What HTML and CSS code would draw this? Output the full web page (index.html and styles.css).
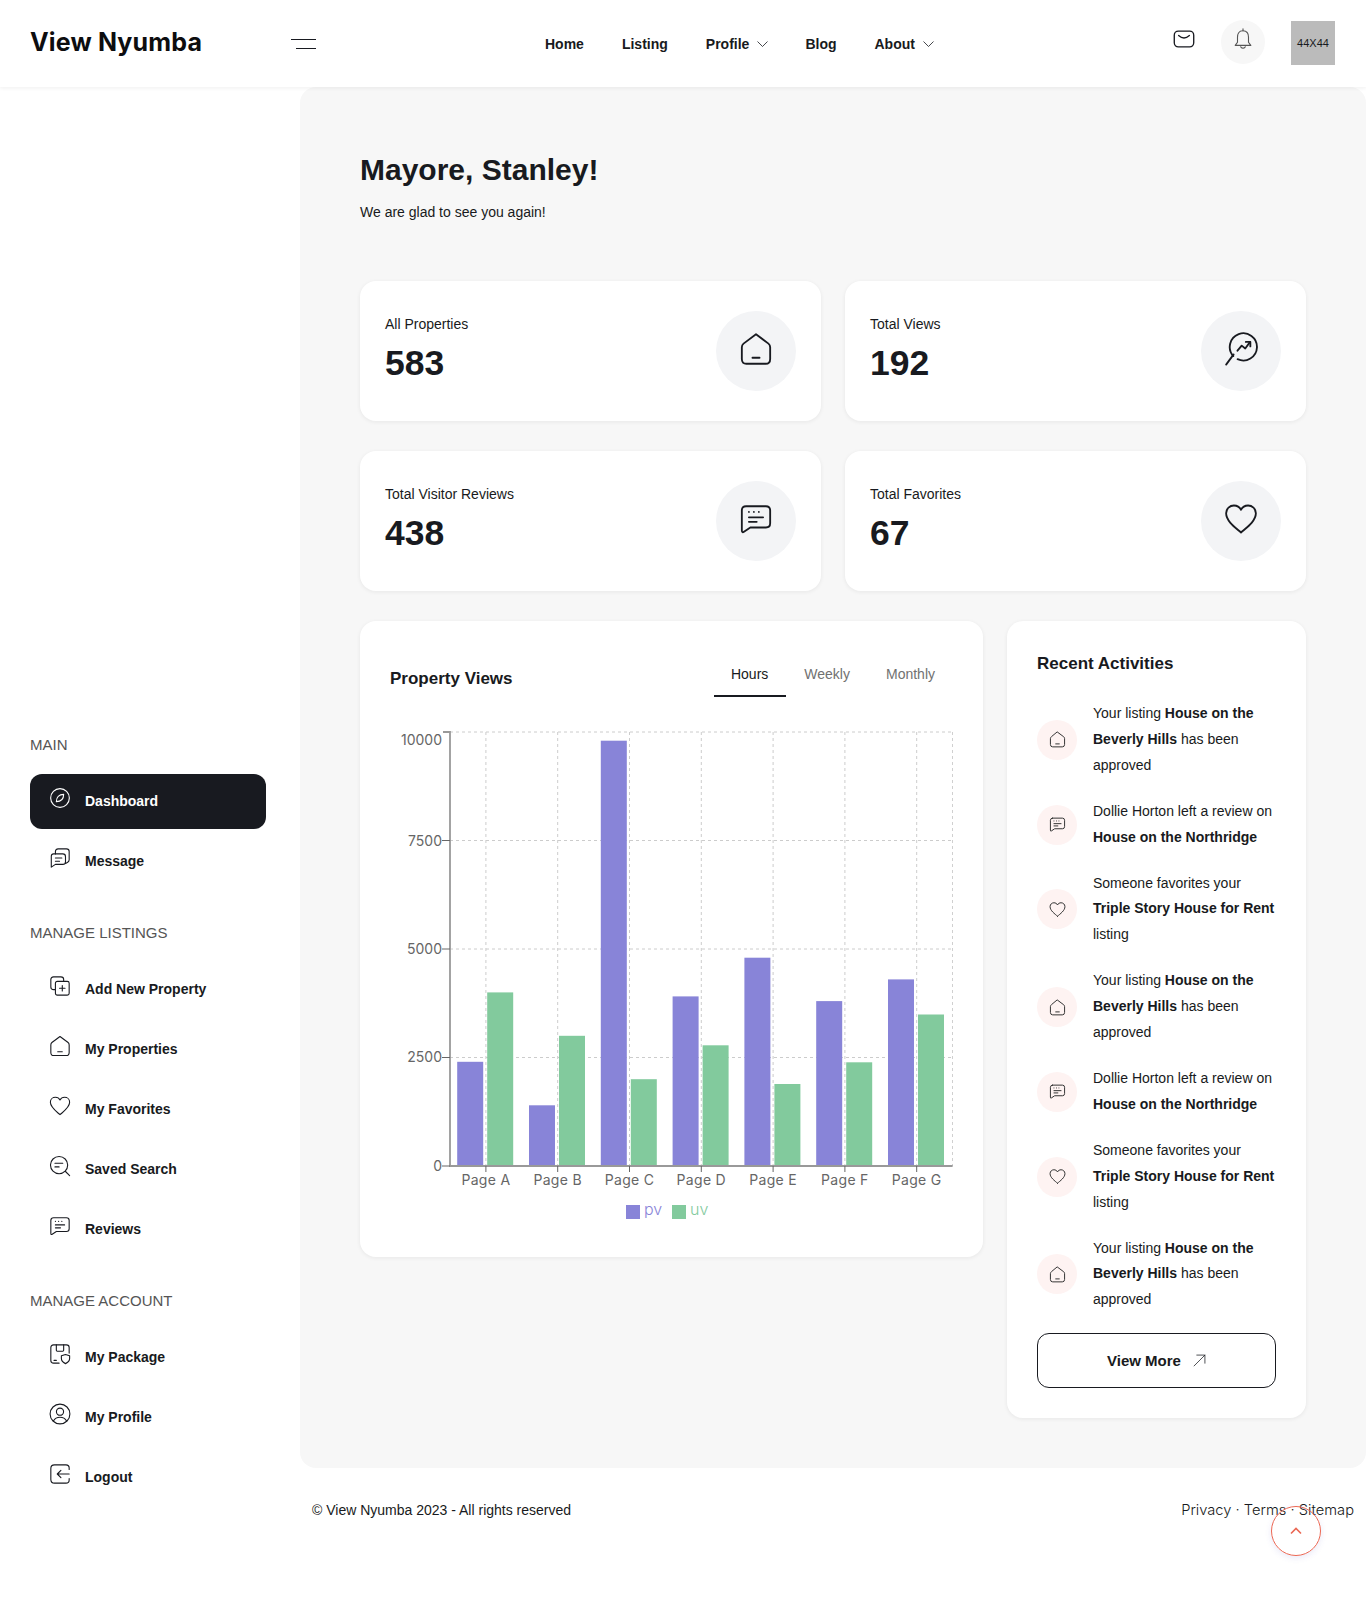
FILE: index.html
```html
<!DOCTYPE html>
<html lang="en">
<head>
    <meta charset="UTF-8">
    <meta name="viewport" content="width=device-width, initial-scale=1.0">
    <title>View Nyumba - Dashboard</title>
    <link rel="stylesheet" href="styles.css">
</head>
<body>

    <!-- icon set -->
    <svg class="sprite" xmlns="http://www.w3.org/2000/svg">
        <symbol id="i-home" viewBox="0 0 24 24"><path d="M12 1.6 L20.8 8.2 Q22 9.2 22 10.8 V19 Q22 22.4 18.8 22.4 H5.2 Q2 22.4 2 19 V10.8 Q2 9.2 3.2 8.2 Z"/><path d="M9.5 18.2 H14.5"/></symbol>
        <symbol id="i-views" viewBox="0 0 24 24"><path d="M6.6 17 A9.6 9.6 0 1 1 9.6 19.2"/><path d="M1.5 23 L6.8 15.8"/><path d="M9.5 13.2 L12.5 9.6 L15 11.6 L18.4 7"/><path d="M15.4 7 H18.6 V10.2"/></symbol>
        <symbol id="i-reviews" viewBox="0 0 24 24"><path d="M5 3 H19 Q22 3 22 6 V15 Q22 18 19 18 H8 L3.5 21 Q2 22 2 20 V6 Q2 3 5 3 Z"/><path d="M7 7h.01 M10.5 7h.01 M14 7h.01"/><path d="M7 10.8 H17 M7 14 H12.5"/></symbol>
        <symbol id="i-heart" viewBox="0 0 24 24"><path d="M12 21.5 C8 18 1.5 13.5 1.5 8 C1.5 4.5 4.2 2.5 7 2.5 C9 2.5 11 3.5 12 5.5 C13 3.5 15 2.5 17 2.5 C19.8 2.5 22.5 4.5 22.5 8 C22.5 13.5 16 18 12 21.5 Z"/></symbol>
        <symbol id="i-compass" viewBox="0 0 24 24"><circle cx="12" cy="12" r="10.2"/><path d="M8 16 C8 11 11 8 16 8 C16 13 13 16 8 16 Z"/></symbol>
        <symbol id="i-message" viewBox="0 0 24 24"><path d="M5 7.5 H15 Q18 7.5 18 10.5 V16 Q18 19 15 19 H7 L2.5 22 V10 Q2.5 7.5 5 7.5 Z"/><path d="M7 7.5 V5 Q7 2 10 2 H19 Q22 2 22 5 V14 Q22 16 20 17 L18 18"/><path d="M7 12 H14 M7 15.5 H11.5"/></symbol>
        <symbol id="i-add" viewBox="0 0 24 24"><path d="M6.5 16 H5 Q2 16 2 13 V5 Q2 2 5 2 H13 Q16 2 16 5 V7"/><rect x="7" y="7" width="15" height="15" rx="2"/><path d="M14.5 11.5 V17.5 M11.5 14.5 H17.5"/></symbol>
        <symbol id="i-search" viewBox="0 0 24 24"><circle cx="11" cy="11" r="9.4"/><path d="M18 18 L22.5 22.5"/><path d="M6.5 9 H15 M6.5 13 H11"/></symbol>
        <symbol id="i-package" viewBox="0 0 24 24"><path d="M11 22 H5 Q2 22 2 19 V5 Q2 2 5 2 H19 Q22 2 22 5 V11"/><path d="M8 2 V8 Q8 9 9 9 H15 Q16 9 16 8 V2"/><path d="M18 12.5 L22.5 14 V17 Q22.5 20.5 18 22.5 Q13.5 20.5 13.5 17 V14 Z"/><path d="M5.5 19 H8"/></symbol>
        <symbol id="i-profile" viewBox="0 0 24 24"><circle cx="12" cy="12" r="10.8"/><circle cx="12" cy="9.5" r="3.9"/><path d="M4.8 19.6 C6.5 16.6 9 15.6 12 15.6 C15 15.6 17.5 16.6 19.2 19.6"/></symbol>
        <symbol id="i-logout" viewBox="0 0 24 24"><path d="M22 7 V5.5 Q22 2 18.5 2 H6 Q2 2 2 6 V18 Q2 22 6 22 H18.5 Q22 22 22 18.5 V17"/><path d="M22 12 H9 M13 8 L9 12 L13 16"/></symbol>
        <symbol id="i-mail" viewBox="0 0 24 20"><rect x="1.2" y="1.2" width="21.6" height="17.6" rx="4.5"/><path d="M6 6.2 Q12 11.5 18 6.2"/></symbol>
        <symbol id="i-bell" viewBox="0 0 24 24"><path d="M12 3 C7 3 6 7 6 10 V15.5 L3.5 19 H20.5 L18 15.5 V10 C18 7 17 3 12 3 Z"/><path d="M12 1 V3 M9.5 20.5 Q12 23.5 14.5 20.5"/></symbol>
        <symbol id="i-arrow" viewBox="0 0 24 24"><path d="M2 22 L22 2 M7 2 H22 V17"/></symbol>
        <symbol id="i-down" viewBox="0 0 12 8"><path d="M1 1.5 L6 6.5 L11 1.5"/></symbol>
    </svg>

    <header class="topbar">
        <a class="logo">View Nyumba</a>
        <div class="burger"><span></span><span></span></div>
        <nav class="topnav">
            <a>Home</a>
            <a>Listing</a>
            <a>Profile <svg class="caret"><use href="#i-down"/></svg></a>
            <a>Blog</a>
            <a>About <svg class="caret"><use href="#i-down"/></svg></a>
        </nav>
        <div class="top-actions">
            <svg class="icon mail-icon"><use href="#i-mail"/></svg>
            <div class="bell"><svg class="icon bell-icon"><use href="#i-bell"/></svg></div>
            <div class="avatar">44X44</div>
        </div>
    </header>

    <div class="wrapper">
        <aside class="sidebar">
            <div class="side-group">
                <p class="side-title">MAIN</p>
                <a class="side-link active"><svg class="icon"><use href="#i-compass"/></svg>Dashboard</a>
                <a class="side-link"><svg class="icon"><use href="#i-message"/></svg>Message</a>
            </div>
            <div class="side-group">
                <p class="side-title">MANAGE LISTINGS</p>
                <a class="side-link"><svg class="icon"><use href="#i-add"/></svg>Add New Property</a>
                <a class="side-link"><svg class="icon"><use href="#i-home"/></svg>My Properties</a>
                <a class="side-link"><svg class="icon"><use href="#i-heart"/></svg>My Favorites</a>
                <a class="side-link"><svg class="icon"><use href="#i-search"/></svg>Saved Search</a>
                <a class="side-link"><svg class="icon"><use href="#i-reviews"/></svg>Reviews</a>
            </div>
            <div class="side-group">
                <p class="side-title">MANAGE ACCOUNT</p>
                <a class="side-link"><svg class="icon"><use href="#i-package"/></svg>My Package</a>
                <a class="side-link"><svg class="icon"><use href="#i-profile"/></svg>My Profile</a>
                <a class="side-link"><svg class="icon"><use href="#i-logout"/></svg>Logout</a>
            </div>
        </aside>

        <div class="content">
            <main class="panel">
                <h1>Mayore, Stanley!</h1>
                <p class="welcome">We are glad to see you again!</p>

                <section class="stats">
                    <div class="stat-card">
                        <div>
                            <div class="stat-label">All Properties</div>
                            <div class="stat-value">583</div>
                        </div>
                        <div class="stat-icon"><svg class="icon"><use href="#i-home"/></svg></div>
                    </div>
                    <div class="stat-card">
                        <div>
                            <div class="stat-label">Total Views</div>
                            <div class="stat-value">192</div>
                        </div>
                        <div class="stat-icon"><svg class="icon"><use href="#i-views"/></svg></div>
                    </div>
                    <div class="stat-card">
                        <div>
                            <div class="stat-label">Total Visitor Reviews</div>
                            <div class="stat-value">438</div>
                        </div>
                        <div class="stat-icon"><svg class="icon"><use href="#i-reviews"/></svg></div>
                    </div>
                    <div class="stat-card">
                        <div>
                            <div class="stat-label">Total Favorites</div>
                            <div class="stat-value">67</div>
                        </div>
                        <div class="stat-icon"><svg class="icon"><use href="#i-heart"/></svg></div>
                    </div>
                </section>

                <section class="lower">
                    <div class="card chart-card">
                        <div class="chart-head">
                            <h4>Property Views</h4>
                            <div class="tabs">
                                <a class="tab active">Hours</a>
                                <a class="tab">Weekly</a>
                                <a class="tab">Monthly</a>
                            </div>
                        </div>
                        <svg class="chart" viewBox="0 0 563 507">
                            <g class="grid">
                                <path d="M60 12 H562.6 M60 120.5 H562.6 M60 229 H562.6 M60 337.5 H562.6"/>
                                <path d="M95.9 12 V446 M167.7 12 V446 M239.5 12 V446 M311.3 12 V446 M383.1 12 V446 M454.9 12 V446 M526.7 12 V446 M562.6 12 V446"/>
                            </g>
                            <g class="bars-pv">
                                <rect x="67.2" y="341.8" width="26" height="104.2"/>
                                <rect x="139" y="385.3" width="26" height="60.7"/>
                                <rect x="210.8" y="20.7" width="26" height="425.3"/>
                                <rect x="282.6" y="276.4" width="26" height="169.6"/>
                                <rect x="354.4" y="237.7" width="26" height="208.3"/>
                                <rect x="426.2" y="281.1" width="26" height="164.9"/>
                                <rect x="498" y="259.4" width="26" height="186.6"/>
                            </g>
                            <g class="bars-uv">
                                <rect x="97.2" y="272.4" width="26" height="173.6"/>
                                <rect x="169" y="315.8" width="26" height="130.2"/>
                                <rect x="240.8" y="359.2" width="26" height="86.8"/>
                                <rect x="312.6" y="325.3" width="26" height="120.7"/>
                                <rect x="384.4" y="364" width="26" height="82"/>
                                <rect x="456.2" y="342.3" width="26" height="103.7"/>
                                <rect x="528" y="294.5" width="26" height="151.5"/>
                            </g>
                            <path class="axis" d="M53 12 H60 V446 H562.6"/>
                            <path class="tick" d="M52 120.5 H60 M52 229 H60 M52 337.5 H60 M52 446 H60 M95.9 446 V452 M167.7 446 V452 M239.5 446 V452 M311.3 446 V452 M383.1 446 V452 M454.9 446 V452 M526.7 446 V452"/>
                            <g class="y-labels">
                                <text x="52" y="25">10000</text>
                                <text x="52" y="126">7500</text>
                                <text x="52" y="234">5000</text>
                                <text x="52" y="342">2500</text>
                                <text x="52" y="451">0</text>
                            </g>
                            <g class="x-labels">
                                <text x="95.9" y="465">Page A</text>
                                <text x="167.7" y="465">Page B</text>
                                <text x="239.5" y="465">Page C</text>
                                <text x="311.3" y="465">Page D</text>
                                <text x="383.1" y="465">Page E</text>
                                <text x="454.9" y="465">Page F</text>
                                <text x="526.7" y="465">Page G</text>
                            </g>
                            <rect class="key-pv" x="236" y="485" width="14" height="14"/>
                            <text class="key-text key-text-pv" x="254" y="495">pv</text>
                            <rect class="key-uv" x="282" y="485" width="14" height="14"/>
                            <text class="key-text key-text-uv" x="300" y="495">uv</text>
                        </svg>
                    </div>

                    <div class="card activity-card">
                        <h4>Recent Activities</h4>
                        <ul class="activities">
                            <li>
                                <span class="act-icon"><svg class="icon"><use href="#i-home"/></svg></span>
                                <p>Your listing <b>House on the Beverly Hills</b> has been approved</p>
                            </li>
                            <li>
                                <span class="act-icon"><svg class="icon"><use href="#i-reviews"/></svg></span>
                                <p>Dollie Horton left a review on <b>House on the Northridge</b></p>
                            </li>
                            <li>
                                <span class="act-icon"><svg class="icon"><use href="#i-heart"/></svg></span>
                                <p>Someone favorites your <b>Triple Story House for Rent</b> listing</p>
                            </li>
                            <li>
                                <span class="act-icon"><svg class="icon"><use href="#i-home"/></svg></span>
                                <p>Your listing <b>House on the Beverly Hills</b> has been approved</p>
                            </li>
                            <li>
                                <span class="act-icon"><svg class="icon"><use href="#i-reviews"/></svg></span>
                                <p>Dollie Horton left a review on <b>House on the Northridge</b></p>
                            </li>
                            <li>
                                <span class="act-icon"><svg class="icon"><use href="#i-heart"/></svg></span>
                                <p>Someone favorites your <b>Triple Story House for Rent</b> listing</p>
                            </li>
                            <li>
                                <span class="act-icon"><svg class="icon"><use href="#i-home"/></svg></span>
                                <p>Your listing <b>House on the Beverly Hills</b> has been approved</p>
                            </li>
                        </ul>
                        <a class="more-btn">View More <svg class="icon"><use href="#i-arrow"/></svg></a>
                    </div>
                </section>
            </main>

            <footer class="footer">
                <span>© View Nyumba 2023 - All rights reserved</span>
                <span class="footer-links">Privacy · Terms · Sitemap</span>
            </footer>
        </div>
    </div>

    <a class="to-top"><svg viewBox="0 0 12 8"><path d="M1 6.5 L6 1.5 L11 6.5"/></svg></a>

</body>
</html>
```

FILE: styles.css
```css
body {
    margin: 0;
    font-family: "Liberation Sans", Arial, sans-serif;
    font-size: 14px;
    line-height: 26px;
    color: #181a20;
    background-color: #fff;
}

p, h1, h4, ul {
    margin: 0;
    padding: 0;
}

.sprite {
    display: none;
}

.icon {
    fill: none;
    stroke: currentColor;
    stroke-width: 1.2;
    stroke-linecap: round;
    stroke-linejoin: round;
}

/* top bar */
.topbar {
    position: relative;
    z-index: 2;
    display: flex;
    align-items: center;
    height: 87px;
    padding: 0 31px 1px 30px;
    background-color: #fff;
    box-shadow: 0 1px 4px rgba(24, 26, 32, 0.07);
    box-sizing: border-box;
}

.logo {
    width: 172px;
    font-family: Inter, sans-serif;
    font-size: 25px;
    font-weight: 700;
    letter-spacing: 0.15px;
    color: #0d0d0f;
    margin-top: -3px;
    white-space: nowrap;
}

.burger {
    width: 25px;
    margin-left: 89px;
    margin-top: 2px;
}

.burger span {
    display: block;
    height: 1px;
    background-color: #181a20;
}

.burger span + span {
    width: 20px;
    margin: 8px 0 0 5px;
}

.topnav {
    display: flex;
    gap: 38px;
    margin-left: 229px;
    margin-top: 2px;
    font-weight: 700;
}

.topnav a {
    display: flex;
    align-items: center;
}

.caret {
    width: 13px;
    height: 8px;
    margin: 0 -2px 0 7px;
    fill: none;
    stroke: #181a20;
    stroke-width: 0.8;
}

.top-actions {
    display: flex;
    align-items: center;
    margin-left: auto;
}

.mail-icon {
    width: 22px;
    height: 18px;
    margin-right: 26px;
    margin-top: -9px;
    stroke-width: 1.5;
}

.bell {
    display: flex;
    align-items: center;
    justify-content: center;
    width: 44px;
    height: 44px;
    margin-right: 26px;
    margin-top: -2px;
    border-radius: 50%;
    background-color: #f7f7f7;
}

.bell-icon {
    width: 22px;
    height: 22px;
    margin-top: -6px;
    color: #555;
}

.avatar {
    width: 44px;
    height: 44px;
    font-size: 11px;
    line-height: 44px;
    text-align: center;
    background-color: #bbb;
}

/* page columns */
.wrapper {
    display: grid;
    grid-template-columns: 300px 1fr;
}

.sidebar {
    padding: 645px 34px 0 30px;
}

.side-group {
    margin-bottom: 31px;
}

.side-title {
    margin-bottom: 16px;
    font-size: 15px;
    color: #555;
}

.side-link {
    display: flex;
    align-items: center;
    height: 55px;
    padding: 0 0 1px 19px;
    border-radius: 12px;
    font-weight: 700;
    box-sizing: border-box;
}

.side-link + .side-link {
    margin-top: 5px;
}

.side-link .icon {
    width: 22px;
    height: 22px;
    margin-right: 14px;
    margin-bottom: 6px;
}

.side-link.active {
    background-color: #181a20;
    color: #fff;
}

.content {
    min-width: 0;
}

.panel {
    padding: 65px 60px 50px;
    background-color: #f7f7f7;
    border-radius: 16px;
}

h1 {
    font-size: 30px;
    line-height: 36px;
    font-weight: 700;
}

.welcome {
    margin-top: 11px;
}

/* stat cards */
.stats {
    display: grid;
    grid-template-columns: 1fr 1fr;
    gap: 30px 24px;
    margin-top: 56px;
}

.stat-card, .card {
    background-color: #fff;
    border-radius: 16px;
    box-shadow: 0 1px 4px rgba(24, 26, 32, 0.07);
}

.stat-card {
    display: flex;
    justify-content: space-between;
    align-items: flex-start;
    padding: 30px 25px;
}

.stat-value {
    font-size: 35.5px;
    line-height: 50px;
    font-weight: 700;
    margin-top: 1px;
}

.stat-icon {
    display: flex;
    align-items: center;
    justify-content: center;
    width: 80px;
    height: 80px;
    border-radius: 50%;
    background-color: #f3f4f6;
}

.stat-icon .icon {
    width: 34px;
    height: 34px;
    margin-bottom: 4px;
    stroke-width: 1.3;
}

/* chart */
.lower {
    display: grid;
    grid-template-columns: 623px 299px;
    gap: 24px;
    align-items: start;
    margin-top: 30px;
}

.chart-card {
    padding: 30px;
}

h4 {
    font-size: 17px;
    line-height: 24px;
    font-weight: 700;
}

.chart-head {
    display: flex;
    justify-content: space-between;
    align-items: flex-start;
}

.chart-head h4 {
    margin-top: 16px;
}

.tabs {
    display: flex;
    gap: 1px;
}

.tab {
    padding: 10px 18px 8px 17px;
    color: #717171;
    border-bottom: 2px solid transparent;
}

.tab.active {
    color: #181a20;
    border-bottom-color: #181a20;
}

.chart {
    display: block;
    width: 563px;
    height: 507px;
    margin-top: 23px;
}

.chart text {
    font-family: Inter, sans-serif;
    font-size: 14px;
    fill: #666;
}

.grid path {
    fill: none;
    stroke: #ccc;
    stroke-dasharray: 3 3;
}

.axis {
    fill: none;
    stroke: #999;
    stroke-width: 1.8;
}

.tick {
    fill: none;
    stroke: #666;
}

.bars-pv rect, .key-pv {
    fill: #8884d8;
}

.bars-uv rect, .key-uv {
    fill: #82ca9d;
}

.y-labels text {
    text-anchor: end;
}

.x-labels text {
    text-anchor: middle;
    letter-spacing: 0.3px;
}

.chart .key-text {
    font-size: 16px;
    font-weight: 300;
}

.chart .key-text-pv {
    fill: #8884d8;
}

.chart .key-text-uv {
    fill: #82ca9d;
}

/* activities */
.activity-card {
    padding: 31px 30px 30px;
}

.activities {
    display: flex;
    flex-direction: column;
    gap: 20px;
    margin-top: 25px;
    list-style: none;
    line-height: 25.9px;
}

.activities li {
    display: flex;
    align-items: center;
    gap: 16px;
}

.act-icon {
    flex: none;
    display: flex;
    align-items: center;
    justify-content: center;
    width: 40px;
    height: 40px;
    border-radius: 50%;
    background-color: #fef3f2;
}

.act-icon .icon {
    width: 17px;
    height: 17px;
    stroke-width: 1.4;
    color: #333;
}

.activities p {
    width: 183px;
}

.more-btn {
    display: flex;
    align-items: center;
    justify-content: center;
    gap: 12px;
    height: 55px;
    margin-top: 20px;
    border: 1px solid #181a20;
    border-radius: 12px;
    font-size: 15px;
    font-weight: 700;
    box-sizing: border-box;
}

.more-btn .icon {
    width: 13px;
    height: 13px;
    stroke-width: 1.4;
}

/* footer */
.footer {
    display: flex;
    justify-content: space-between;
    padding: 29px 12px 78px;
}

.footer-links {
    font-family: Inter, sans-serif;
    font-weight: 300;
    font-size: 14.7px;
}

.to-top {
    position: fixed;
    right: 45px;
    bottom: 45px;
    display: flex;
    align-items: center;
    justify-content: center;
    width: 50px;
    height: 50px;
    border: 1px solid #eb6753;
    border-radius: 50%;
    box-shadow: 0 2px 6px rgba(80, 80, 200, 0.12);
    box-sizing: border-box;
}

.to-top svg {
    width: 12px;
    height: 8px;
    fill: none;
    stroke: #eb6753;
    stroke-width: 1.6;
}
```
